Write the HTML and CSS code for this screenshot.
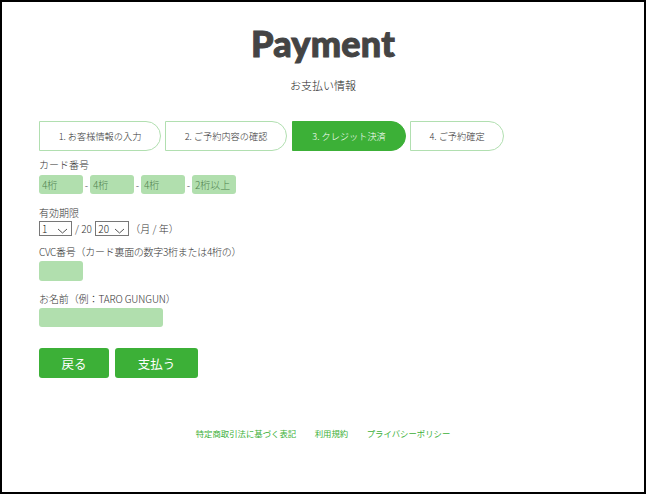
FILE: index.html
```html
<!DOCTYPE html>
<html lang="ja">
	<head>
		<title>Payment</title>
		<meta charset="utf-8" />
		<link rel="stylesheet" href="styles.css">
	</head>
	<body>
		<div class="frame">
			<h1 class="title">Payment</h1>
			<p class="subtitle">お支払い情報</p>
			<div class="steps">
				<div class="step step1">1. お客様情報の入力</div>
				<div class="step step2">2. ご予約内容の確認</div>
				<div class="step step3 current">3. クレジット決済</div>
				<div class="step step4">4. ご予約確定</div>
			</div>
			<div class="group card">
				<div class="label">カード番号</div>
				<div class="row">
					<input class="field short" placeholder="4桁"><span class="dash">-</span>
					<input class="field short" placeholder="4桁"><span class="dash">-</span>
					<input class="field short" placeholder="4桁"><span class="dash">-</span>
					<input class="field short" placeholder="2桁以上">
				</div>
			</div>
			<div class="group expiry">
				<div class="label">有効期限</div>
				<div class="row">
					<div class="select month">1
						<svg class="chev" width="11" height="6" viewBox="0 0 11 6"><path d="M1 1l4.5 4L10 1" fill="none" stroke="#555" stroke-width="1"/></svg>
					</div>
					<span class="sep">/ 20</span>
					<div class="select year">20
						<svg class="chev" width="11" height="6" viewBox="0 0 11 6"><path d="M1 1l4.5 4L10 1" fill="none" stroke="#555" stroke-width="1"/></svg>
					</div>
					<span class="unit">（月 / 年）</span>
				</div>
			</div>
			<div class="group cvc">
				<div class="label narrow">CVC番号（カード裏面の数字3桁または4桁の）</div>
				<input class="field short tall">
			</div>
			<div class="group name">
				<div class="label slim">お名前（例：TARO GUNGUN）</div>
				<input class="field wide">
			</div>
			<div class="buttons">
				<button class="btn back">戻る</button>
				<button class="btn pay">支払う</button>
			</div>
			<div class="links">
				<a href="#">特定商取引法に基づく表記</a>
				<a href="#">利用規約</a>
				<a href="#">プライバシーポリシー</a>
			</div>
		</div>
	</body>
</html>
```

FILE: styles.css
```css
* {
	box-sizing: border-box;
}
html, body {
	margin: 0;
	padding: 0;
}
body {
	font-family: "Noto Sans CJK JP", "Noto Sans", sans-serif;
	font-size: 10px;
	color: #333;
	background: #fff;
}
.frame {
	width: 646px;
	height: 494px;
	border: 2px solid #000;
	padding: 0 37px;
	overflow: hidden;
}
.title {
	margin: 19px 0 0;
	height: 44px;
	line-height: 44px;
	text-align: center;
	font-family: Lato, sans-serif;
	font-size: 36px;
	font-weight: 900;
	color: #444;
	-webkit-text-stroke: 1px #444;
	letter-spacing: 0.2px;
}
.subtitle {
	margin: 12px 0 0;
	height: 16px;
	line-height: 16px;
	text-align: center;
	font-size: 11px;
	font-weight: 300;
	color: #222;
}
.steps {
	display: flex;
	margin-top: 28px;
	gap: 4px;
}
.step {
	height: 30px;
	line-height: 28px;
	border: 1px solid #b1dfb0;
	border-radius: 0 15px 15px 0;
	text-align: center;
	font-size: 9.2px;
	font-weight: 300;
	color: #333;
}
.step1, .step2 {
	width: 122px;
}
.step3 {
	width: 114px;
	margin-left: 1px;
}
.step4 {
	width: 94px;
}
.current {
	background: #3cb037;
	border-color: #3cb037;
	color: #fff;
}
.group {
	font-weight: 300;
}
.label {
	height: 14px;
	line-height: 12px;
}
.narrow {
	letter-spacing: -0.28px;
}
.slim {
	letter-spacing: -0.1px;
}
.row {
	display: flex;
	align-items: center;
}
.card {
	margin-top: 8px;
}
.card .row {
	margin-top: 2px;
}
.field {
	display: block;
	height: 19px;
	padding: 0 3px;
	border: 0;
	border-radius: 3px;
	background: #b1dfae;
	font-family: inherit;
	font-size: 10px;
	font-weight: 300;
	outline: 0;
}
.field::placeholder {
	color: #4f7f4f;
	opacity: 1;
}
.short {
	width: 44px;
}
.tall {
	height: 20px;
	margin-top: 1px;
}
.wide {
	width: 124px;
	margin-top: 1px;
}
.dash {
	width: 7px;
	text-align: center;
	line-height: 19px;
}
.expiry {
	margin-top: 13px;
}
.expiry .row {
	height: 15px;
}
.select {
	position: relative;
	height: 15px;
	line-height: 13px;
	border: 1px solid #777;
	padding-left: 2px;
	font-size: 10px;
	color: #222;
}
.month {
	width: 33px;
}
.year {
	width: 34px;
}
.chev {
	position: absolute;
	right: 3px;
	top: 6px;
}
.sep {
	margin: 0 3.5px 0 3px;
	white-space: nowrap;
}
.unit {
	margin-left: 1px;
}
.cvc {
	margin-top: 10px;
}
.name {
	margin-top: 12px;
}
.buttons {
	display: flex;
	gap: 6px;
	margin-top: 21px;
}
.btn {
	height: 30px;
	border: 0;
	border-radius: 3px;
	background: #3cb037;
	color: #fff;
	font-family: inherit;
	font-size: 12.5px;
	font-weight: 400;
	padding: 0;
}
.back {
	width: 70px;
}
.pay {
	width: 83px;
}
.links {
	display: flex;
	justify-content: center;
	gap: 18.5px;
	margin-top: 48px;
	font-weight: 400;
	font-size: 8.4px;
	line-height: 14px;
}
.links a {
	color: #3cb037;
	text-decoration: none;
}
```
